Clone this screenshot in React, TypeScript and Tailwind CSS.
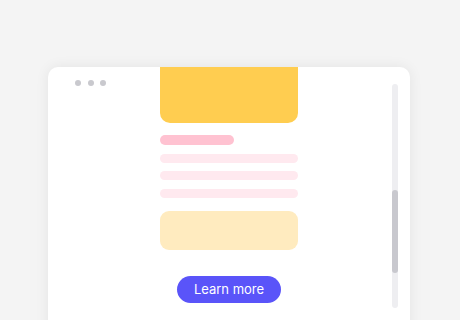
export default function App() {
  return (
    <div className="w-[460px] h-[320px] overflow-hidden bg-[#f4f4f4] pt-[67px] pl-[48px]" style={{ fontFamily: "Inter, sans-serif" }}>
      <div className="relative w-[362px] h-[280px] bg-white rounded-t-[10px] shadow-[0_0_14px_rgba(0,0,0,0.07)] overflow-hidden">
        {/* window dots */}
        <div className="absolute left-[27px] top-[13px] flex gap-[6.5px]">
          <span className="w-[6px] h-[6px] rounded-full bg-[#c9c9ce]" />
          <span className="w-[6px] h-[6px] rounded-full bg-[#c9c9ce]" />
          <span className="w-[6px] h-[6px] rounded-full bg-[#c9c9ce]" />
        </div>

        {/* scrolled content */}
        <div className="w-[138px] mx-auto flex flex-col">
          <div className="h-[56px] bg-[#ffcd50] rounded-b-[10px]" />
          <div className="mt-[12px] h-[10px] w-[74px] rounded-full bg-[#ffc2d1]" />
          <div className="mt-[9px] h-[9px] rounded-full bg-[#ffe9ef]" />
          <div className="mt-[8px] h-[9px] rounded-full bg-[#ffe9ef]" />
          <div className="mt-[9px] h-[9px] rounded-full bg-[#ffe9ef]" />
          <div className="mt-[13px] h-[39px] rounded-[9px] bg-[#ffebbf]" />
          <button className="mt-[26px] self-center w-[104px] h-[27px] rounded-full bg-[#5a54f9] text-white text-[13px] font-normal leading-none">
            Learn more
          </button>
        </div>

        {/* scrollbar */}
        <div className="absolute left-[344px] top-[17px] w-[6px] h-[224px] rounded-full bg-[#eeeef1]">
          <div className="mt-[106px] h-[83px] rounded-full bg-[#c8c8ce]" />
        </div>
      </div>
    </div>
  );
}
